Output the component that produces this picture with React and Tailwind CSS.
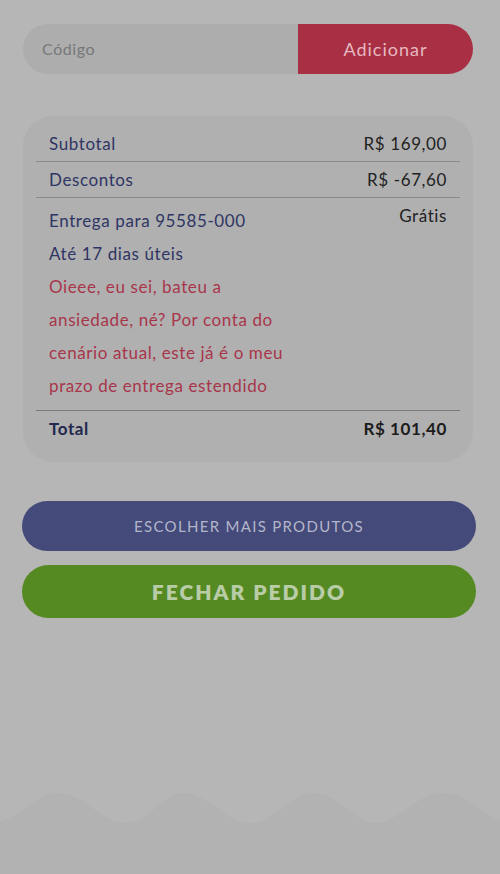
import React from 'react';

const Row = ({ label, value, bold }) => (
  <div className="flex items-center justify-between px-[13px] h-[35px]">
    <span className={bold ? 'font-bold text-[#23284f]' : 'text-[#2f3564]'}>{label}</span>
    <span className={bold ? 'font-bold text-[#1c1c1c]' : 'text-[#222222]'}>{value}</span>
  </div>
);

const App = () => {
  return (
    <div
      className="relative w-[500px] h-[874px] overflow-hidden bg-[#b6b6b6] text-[17px] tracking-[0.6px]"
      style={{ fontFamily: 'Lato, "Noto Sans", sans-serif' }}
    >
      <div className="px-[23px] pt-[24px]">
        {/* Cupom */}
        <div className="flex h-[50px] rounded-full overflow-hidden w-[450px]">
          <div className="flex-1 bg-[#adadad] flex items-center pl-[19px] text-[#787878] text-[16px]">
            Código
          </div>
          <button className="w-[175px] bg-[#a93044] text-[#e6b9c0] text-[18px] tracking-[1px]">
            Adicionar
          </button>
        </div>

        {/* Resumo */}
        <div className="mt-[42px] w-[450px] rounded-[30px] bg-[#b0b0b0] px-[13px] pt-[10px] pb-[16px]">
          <Row label="Subtotal" value="R$ 169,00" />
          <div className="h-px bg-[#8a8a8a]" />
          <Row label="Descontos" value="R$ -67,60" />
          <div className="h-px bg-[#8a8a8a]" />
          <div className="px-[13px] pt-[6px] pb-[8px] flex justify-between">
            <div className="leading-[33px]">
              <div className="text-[#2f3564]">Entrega para 95585-000</div>
              <div className="text-[#2f3564]">Até 17 dias úteis</div>
              <div className="text-[#a8364b]">
                Oieee, eu sei, bateu a<br />
                ansiedade, né? Por conta do<br />
                cenário atual, este já é o meu<br />
                prazo de entrega estendido
              </div>
            </div>
            <span className="text-[#222222] leading-[20px] pt-[2px]">Grátis</span>
          </div>
          <div className="h-px bg-[#7a7a7a]" />
          <Row label="Total" value="R$ 101,40" bold />
        </div>
      </div>

      {/* Ações */}
      <div className="px-[22px] mt-[39px] flex flex-col gap-[14px]">
        <button className="h-[50px] w-[454px] rounded-full bg-[#444a79] text-[#b3b6cb] text-[15px] tracking-[1.3px]">
          ESCOLHER MAIS PRODUTOS
        </button>
        <button className="h-[53px] w-[454px] rounded-full bg-[#558a22] text-[#b9cca8] text-[21px] font-extrabold tracking-[2px]">
          FECHAR PEDIDO
        </button>
      </div>

      {/* Ondas */}
      <svg className="absolute left-0 bottom-0" width="500" height="84" viewBox="0 0 500 84">
        <path
          d="M0 31 C 20 28, 35 4, 57 3 C 85 3, 100 32, 125 33 C 150 33, 160 4, 183 3 C 210 3, 225 33, 250 33 C 275 33, 290 3, 313 3 C 340 3, 355 33, 375 33 C 400 33, 415 3, 443 3 C 470 3, 485 28, 500 31 L 500 84 L 0 84 Z"
          fill="#b2b2b2"
        />
      </svg>
    </div>
  );
};

export default App;
